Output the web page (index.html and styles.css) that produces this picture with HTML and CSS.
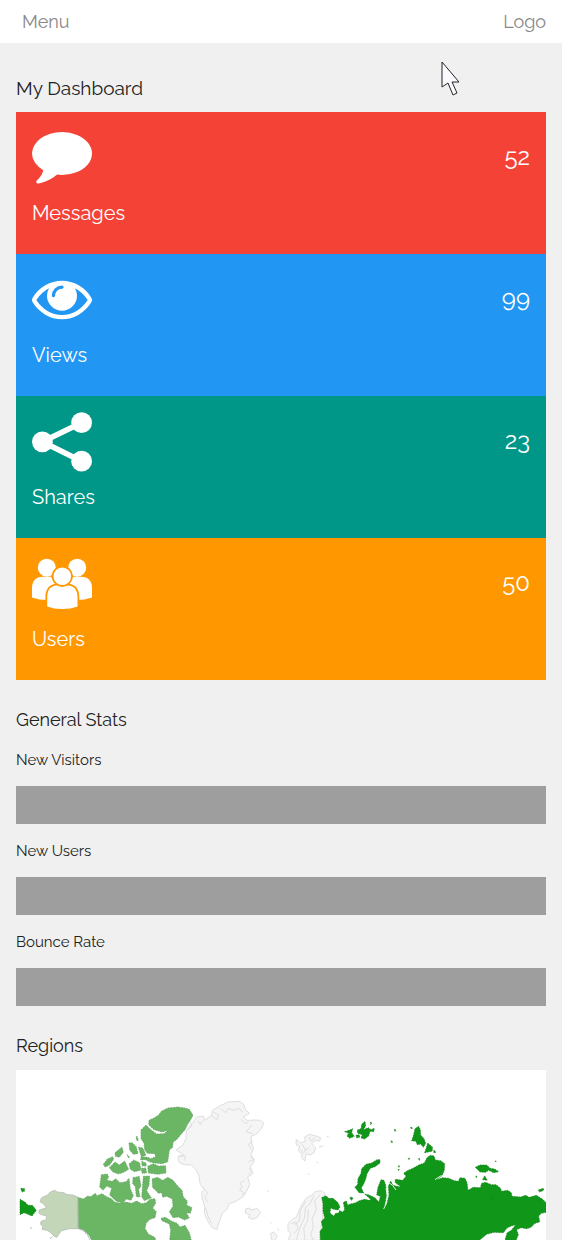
FILE: index.html
```
<!DOCTYPE html>
<html lang="en">
<head>
<meta charset="utf-8">
<meta name="viewport" content="width=device-width, initial-scale=1">
<title>My Dashboard</title>
<link rel="stylesheet" href="styles.css">
</head>
<body>
<header class="topbar">
  <button class="menu-button" type="button">Menu</button>
  <span class="logo">Logo</span>
</header>
<main class="content">
  <h1 class="heading heading-main">My Dashboard</h1>
  <section class="cards">
    <article class="card card-red">
      <div class="card-row">
        <svg class="card-icon" viewBox="0 136 1792 1792" aria-hidden="true"><path d="M1792 896q0 174-120 321.500t-326 233-450 85.500q-70 0-145-8-198 175-460 242-49 14-114 22-17 2-30.500-9t-17.500-29v-1q-3-4-.5-12t2-10 4.500-9.500l6-9 7-8.500 8-9q7-8 31-34.500t34.500-38 31-39.500 32.500-51 27-59 26-76q-157-89-247.500-220t-90.500-281q0-130 71-248.500t191-204.500 286-136.500 348-50.500q244 0 450 85.500t326 233 120 321.500z"/></svg>
        <span class="card-value">52</span>
      </div>
      <h2 class="card-label">Messages</h2>
    </article>
    <article class="card card-blue">
      <div class="card-row">
        <svg class="card-icon" viewBox="0 64 1792 1792" aria-hidden="true"><path d="M1664 960q-152-236-381-353 61 104 61 225 0 185-131.500 316.500t-316.500 131.500-316.500-131.500-131.500-316.500q0-121 61-225-229 117-381 353 133 205 333.500 326.500t434.500 121.500 434.500-121.500 333.500-326.500zm-720-384q0-20-14-34t-34-14q-125 0-214.500 89.500t-89.500 214.500q0 20 14 34t34 14 34-14 14-34q0-86 61-147t147-61q20 0 34-14t14-34zm848 384q0 34-20 69-140 230-376.500 368.500t-499.500 138.500-499.500-139-376.500-368q-20-35-20-69t20-69q140-229 376.500-368t499.500-139 499.500 139 376.500 368q20 35 20 69z"/></svg>
        <span class="card-value">99</span>
      </div>
      <h2 class="card-label">Views</h2>
    </article>
    <article class="card card-teal">
      <div class="card-row">
        <svg class="card-icon" viewBox="0 0 60 60" aria-hidden="true"><path d="M49.600 10.700L10.400 29.800L49.600 49.200" fill="none" stroke="#fff" stroke-width="5.600"/><circle cx="49.600" cy="10.700" r="10.400"/><circle cx="10.400" cy="29.800" r="10.400"/><circle cx="49.600" cy="49.200" r="10.400"/></svg>
        <span class="card-value">23</span>
      </div>
      <h2 class="card-label">Shares</h2>
    </article>
    <article class="card card-orange">
      <div class="card-row">
        <svg class="card-icon" viewBox="0 0 60 60" aria-hidden="true"><circle cx="14.800" cy="13.700" r="9"/><circle cx="45.200" cy="13.700" r="9"/><path d="M0 43.500V34.500Q0 23 11 22.700H19L25 32L16 46Q7 46 0 43.500ZM60 43.500V34.500Q60 23 49 22.700H41L35 32L44 46Q53 46 60 43.500Z"/><g stroke="#ff9800" stroke-width="3.600" paint-order="stroke"><path d="M15.200 52.500V43Q15.200 31.500 26.500 31.200H34Q45.500 31.500 45.500 43V52.500Q39 55 30.300 55T15.200 52.500Z"/><circle cx="30.300" cy="22.300" r="8.800"/></g></svg>
        <span class="card-value">50</span>
      </div>
      <h2 class="card-label">Users</h2>
    </article>
  </section>
  <section class="stats">
    <h2 class="heading">General Stats</h2>
    <p class="stat-label" id="visitors">New Visitors</p>
    <div class="bar" role="progressbar" aria-labelledby="visitors"></div>
    <p class="stat-label" id="users">New Users</p>
    <div class="bar" role="progressbar" aria-labelledby="users"></div>
    <p class="stat-label" id="bounce">Bounce Rate</p>
    <div class="bar" role="progressbar" aria-labelledby="bounce"></div>
  </section>
  <section class="regions">
    <h2 class="heading">Regions</h2>
    <svg class="map" viewBox="48 30 1590 510" role="img" aria-label="World map of regions">
      <g class="land-mid">
        <path d="M233 412L250 417L263 408L272 410L286 400L291 407L306 401L320 410L334 416L345 427L361 430L378 426L395 430L410 423L425 431L439 428L450 418L465 416L467 430L458 444L469 455L465 473L450 478L439 489L435 505L445 522L464 532L470 545H277L267 526L250 510L233 505Z"/>
        <path d="M423 210L438 195L450 207L470 222L492 221L504 211L486 216L462 209L446 194L447 181L462 174L475 166L485 153L504 144L533 141L555 144L568 148L579 166L571 181L563 193L555 209L542 224L531 238L519 247L518 262L508 270L506 286L503 306L486 311L464 309L450 306L436 299L422 300L423 290L444 292L452 296L467 290L464 281L442 280L434 270L432 250L423 236Z"/>
        <path d="M387 249L397 248L409 261L414 281L400 283L389 270ZM415 261L428 264L438 286L424 290ZM345 278L366 261L370 277L358 292L346 289ZM310 313L322 297L338 290L341 298L328 316L315 321ZM328 323L345 306L358 315L374 303L386 328L371 337L355 342L339 336ZM387 312L401 300L419 308L423 330L404 335L391 328ZM425 304L438 309L439 318H426ZM424 325L437 324L440 339L426 340ZM443 319L460 311L475 318L497 317L498 339L474 343L445 339Z"/>
        <path d="M304 344L322 342L326 351L320 361L337 364L347 356L360 368L378 365L387 355L391 386L400 407L393 421L378 417L369 430L349 424L329 405L335 385L320 378L309 391L299 381ZM399 353L418 349L423 379L416 388L420 411L409 410L406 380L398 371ZM430 349L449 348L447 376L440 392L454 413L433 422L425 410ZM456 357L472 352L488 361L504 352L519 361L533 378L546 391L550 411L562 423L560 435L576 443L571 460L559 458L568 474L553 480L536 471L519 473L508 455L519 439L517 417L500 409L488 412L485 398L475 400L466 390L458 383Z"/>
        <path d="M483 475L496 472L514 483L531 490L540 501L555 496L568 518L574 541H509L512 511L508 492L486 482Z"/>
        <path d="M408 230L412 230L415 242L410 241ZM381 284L388 290L386 295Z"/>
      </g>
      <path class="land-pale" d="M233 411L218 405L201 404L191 398L171 396L164 391L151 396L143 405L125 413L120 425L132 432L139 444L118 450L117 460L130 466L139 466L139 479L123 484L122 492L129 501L126 508L142 511L151 517L162 528L170 532L184 512L208 506H234Z"/>
      <path class="land-edge" d="M233 413V505L249 511L263 526L270 540M151 535L158 530M91 503L97 507"/>
      <g class="land-dark">
        <path d="M60 418L75 426L84 436L97 436L109 451L96 468L82 462L72 458L60 464ZM62 385L74 386L73 394L66 396Z"/>
      </g>
      <g transform="translate(480 0)">
        <g class="land-none">
          <path d="M48 270L69 255L78 235L79 211L97 190L110 172L130 168L133 181L155 166L157 151L181 137L204 126L238 124L250 132L257 149L268 160L249 171L261 181L286 180L301 181L312 190L304 206L289 223L274 228L274 248L281 266L273 283L283 303L271 321L279 340L263 351L269 373L261 391L250 410L224 426L208 430L201 447L187 460L177 487L171 508L157 503L145 486L133 460L134 438L126 414L125 397L133 389L121 374L116 345L108 329L94 315L72 314L57 307L54 292L72 286L62 279Z"/>
          <path class="ridge" d="M153 166L170 180L176 165L160 156M181 145L197 158L205 145M205 145L220 151L236 145L249 156M82 210L95 199L91 186M113 183L121 194L128 182M243 178L258 192L264 185M275 195L259 216L278 221M279 245L265 253L274 269M271 291L283 298L266 306M265 323L275 333L266 343M254 360L240 371L247 378L239 391L253 398L244 407M130 382L143 399L134 411L143 426M137 444L144 468L154 490M55 287L76 288L74 302"/>
          <path d="M409 238L421 249L436 244L434 231L448 223L468 228L481 233L480 243L465 242L455 251L467 263L463 277L450 285L438 281L435 303L426 296L425 281L414 271L419 258L408 254Z"/>
          <path class="ridge" d="M427 253L437 272L448 261M447 232L453 243L466 232M421 268L431 279L439 266M500 230L506 230M477 261L490 258M470 306L475 309M443 342L448 343"/>
          <path d="M257 447L269 444L273 451L291 445L302 457L291 473L277 478L265 472L270 465L256 459ZM331 521L341 516L352 528L344 541H336Z"/>
          <path d="M384 490L397 479L410 470L418 449L427 431L438 415L454 406L466 395L484 392L496 401L488 413L487 440L488 471L482 510L480 541H384L392 521L384 512Z"/>
          <path class="ridge" d="M437 424L421 452L418 482L403 495M462 405L451 430L436 443L433 475L420 501L409 541M481 404L464 421L469 449L456 477L460 501L452 523L460 541M445 448L443 483L431 505L435 541M394 491L408 486L414 506L402 521M323 391L326 396M331 487L334 491M353 505L357 512"/>
        </g>
      </g>
      <g class="land-dark" transform="translate(900 0)">
        <path d="M65 413L78 407L86 415L99 415L113 427L120 441L114 450L101 448L92 444L90 459L101 468L107 460L116 459L119 451L127 457L134 449L130 427L139 423L143 436L151 432L165 429L178 422L194 418L208 421L218 414L237 426L241 409L230 405L234 382L243 359L252 361L257 375L260 405L253 440L261 430L267 405L265 379L272 363L279 376L298 381L285 367L286 358L308 361L318 349L311 340L322 332L339 325L356 315L373 309L381 293L391 286L402 288L406 300L422 302L434 311L433 331L426 347L408 360L428 353L446 355L463 362L475 364L480 353L495 355L501 368L504 391L520 382L541 383L545 370L557 367L574 374L588 374L601 384L605 394L623 391L634 398L636 409L662 411L677 406L688 412L709 406L727 417L738 428V457L724 460L716 468L719 486L705 490L693 502L680 506L663 503L650 509L655 524L648 541H615L621 519L635 510L647 494L632 499L621 504L610 518L582 517L560 523L538 541H61L60 514L68 504L64 484L74 474L69 453L69 430Z"/>
        <path d="M165 382L173 373L174 356L183 340L185 326L198 313L215 309L231 299L240 299L240 309L225 320L211 325L201 341L197 358L190 374L184 383L191 399L177 398ZM194 402L207 405L226 414L234 425L211 417Z"/>
        <path d="M134 215L147 211L158 206L155 218L163 229L149 235L141 228L146 220ZM172 210L183 206L185 193L195 184L197 198L190 209L205 203L213 209L223 205L221 215L210 214L206 228L194 237L183 234L187 224L173 220ZM168 226L177 224L180 231L170 234Z"/>
        <path d="M342 220L345 206L356 199L361 209L362 225L372 236L377 250L370 262L362 252L352 254L347 243L335 243L339 230ZM374 278L379 263L383 249L398 262L396 274ZM401 270L408 276L402 279ZM526 322L540 315L560 315L570 325L584 327L596 335L581 338L566 331L557 337L540 336ZM548 359L554 347L562 361ZM715 390L730 385L731 391L719 396ZM150 413L156 411L159 417L153 421ZM570 416L580 411L578 419Z"/>
        <path d="M283 208L289 211L284 214ZM272 243L278 244L276 248ZM331 203L337 202L336 207ZM211 187L216 189L212 194ZM295 317L299 318L297 322ZM294 328L298 329L296 332ZM325 295L329 295L327 299ZM355 296L360 296L358 301ZM585 303L589 304L587 306ZM527 348L532 350L529 353Z"/>
      </g>
      <path class="inlet" transform="translate(900 0)" d="M258 385L262 408L258 433L251 447M265 367L278 376L288 390M276 361L288 372L299 379M405 359L417 351L425 346"/>
    </svg>
  </section>
</main>
<svg class="pointer" viewBox="0 0 18 36" aria-hidden="true"><path d="M1 1V26L7 22L12 34L16 32L11 21H18Z"/></svg>
</body>
</html>
```
FILE: styles.css
```
* {
  box-sizing: border-box;
}
body {
  margin: 0;
  background: #f0f0f0;
  color: #222;
  font-family: Raleway, Lato, sans-serif;
  font-size: 15px;
  line-height: 24px;
}
.topbar {
  display: flex;
  justify-content: space-between;
  align-items: center;
  padding: 10px 16px 9px 22px;
  background: #fff;
  color: #888;
  font-size: 18px;
}
.menu-button {
  padding: 0;
  border: 0;
  background: none;
  color: inherit;
  font: inherit;
}
.content {
  padding: 32px 16px 0;
}
.heading {
  margin: 0 0 11px;
  font-size: 18px;
  font-weight: 400;
  line-height: 26px;
}
.heading-main {
  font-size: 19px;
}
.card {
  padding: 16px;
  color: #fff;
}
.card-red { background: #f44336; }
.card-blue { background: #2196f3; }
.card-teal { background: #009688; }
.card-orange { background: #ff9800; }
.card-row {
  display: flex;
  justify-content: space-between;
  align-items: center;
}
.card-icon {
  display: block;
  width: 60px;
  height: 60px;
  fill: #fff;
}
.card-value {
  padding-bottom: 2px;
  font-size: 24px;
  line-height: 36px;
  font-variant-numeric: oldstyle-nums;
}
.card-label {
  margin: 10px 0;
  font-size: 20px;
  font-weight: 400;
  line-height: 30px;
}
.stats,
.regions {
  padding-top: 27px;
}
.stats .heading {
  margin-bottom: 15px;
}
.stat-label {
  margin: 0;
}
.bar {
  height: 38px;
  margin: 14px 0 15px;
  background: #9e9e9e;
}
.bar:last-child {
  margin-bottom: 0;
}
.map {
  display: block;
  width: 100%;
  background: #fff;
}
.land-dark {
  fill: #109618;
  stroke: #16801b;
  stroke-width: 2;
  stroke-dasharray: 5 3;
}
.land-mid {
  fill: #6ab665;
  stroke: #649f61;
  stroke-width: 2;
  stroke-dasharray: 5 3;
}
.land-pale {
  fill: #c3d6b8;
  stroke: #bdc4b8;
  stroke-width: 3;
}
.land-edge {
  fill: none;
  stroke: #b8b8b8;
  stroke-width: 4;
  stroke-dasharray: 4 3;
}
.land-none {
  fill: #f5f5f5;
  stroke: #dedede;
  stroke-width: 3;
}
.ridge {
  fill: none;
}
.inlet {
  fill: none;
  stroke: #e3f0e3;
  stroke-width: 3;
}
.pointer {
  position: absolute;
  top: 61px;
  left: 441px;
  width: 18px;
  height: 36px;
  fill: #fafbff;
  stroke: #222;
  pointer-events: none;
}
```
